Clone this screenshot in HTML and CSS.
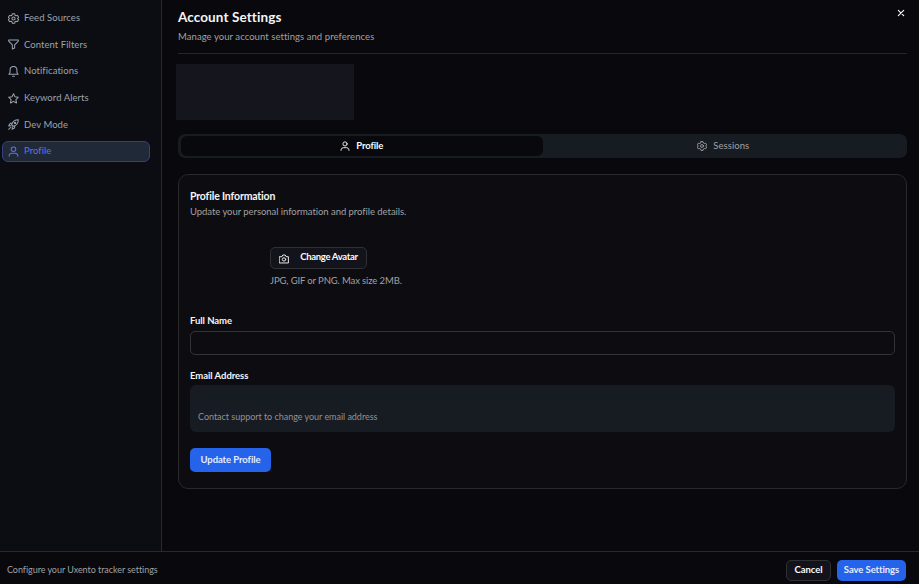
FILE: index.html
```html
<!DOCTYPE html>
<html lang="en">
<head>
<meta charset="utf-8">
<title>Account Settings</title>
<link rel="stylesheet" href="styles.css">
</head>
<body>
<svg width="0" height="0" class="defs">
  <defs>
    <symbol id="gear" viewBox="0 0 24 24"><path d="M9.500 1.500h5l.8 3.300 2.300 1.300 3.200-.9 2.300 4.200L20.800 12l2.300 2.600-2.300 4.200-3.200-.9-2.300 1.300-.8 3.300h-5l-.8-3.300-2.300-1.300-3.200.9-2.300-4.200L3.200 12 .9 9.400l2.300-4.200 3.200.9 2.300-1.300z"/><circle cx="12" cy="12" r="3.500"/></symbol>
    <symbol id="filter" viewBox="0 0 24 24"><path d="M1.500 2h21v2.500L14.500 13v6.500l-5 2.500v-9L1.500 4.500z"/></symbol>
    <symbol id="bell" viewBox="0 0 24 24"><path d="M2 18l2.500-4V8.500a7.500 7.500 0 0 1 15 0V14l2.500 4zM10 22.500h4"/></symbol>
    <symbol id="star" viewBox="0 0 24 24"><path d="M12 1.500l3.200 6.700 7.300 1-5.300 5.200 1.300 7.300-6.500-3.500-6.500 3.500 1.300-7.300L1.500 9.200l7.300-1z"/></symbol>
    <symbol id="rocket" viewBox="0 0 24 24"><path d="M8 12C10 6 14 1.500 22.500 1.500 22.500 10 18 14 12 16zM9 9.500H5l-3.500 5.500 5.500-.5M14.500 15v4L9 22.500l.5-5.500M1.500 22.500l4.500-4.500"/><circle cx="15.500" cy="8.500" r="1.500"/></symbol>
    <symbol id="user" viewBox="0 0 24 24"><circle cx="12" cy="7" r="5"/><path d="M2.500 22.500V21a6 6 0 0 1 6-5h7a6 6 0 0 1 6 5v1.500"/></symbol>
    <symbol id="camera" viewBox="0 0 24 24"><path d="M1.500 6.500H7l2-4h6l2 4h5.500v15h-21z"/><circle cx="12" cy="13" r="4"/></symbol>
    <symbol id="close" viewBox="0 0 24 24"><path d="M4 4l16 16M20 4L4 20"/></symbol>
  </defs>
</svg>
<div class="app">
  <div class="body">
    <nav class="sidebar">
      <a class="item"><svg><use href="#gear"/></svg><span>Feed Sources</span></a>
      <a class="item"><svg><use href="#filter"/></svg><span>Content Filters</span></a>
      <a class="item"><svg><use href="#bell"/></svg><span>Notifications</span></a>
      <a class="item"><svg><use href="#star"/></svg><span>Keyword Alerts</span></a>
      <a class="item"><svg><use href="#rocket"/></svg><span>Dev Mode</span></a>
      <a class="item active"><svg><use href="#user"/></svg><span>Profile</span></a>
    </nav>
    <main class="main">
      <header class="head">
        <div>
          <h1>Account Settings</h1>
          <p class="subtitle">Manage your account settings and preferences</p>
        </div>
        <svg class="close"><use href="#close"/></svg>
      </header>
      <div class="placeholder"></div>
      <div class="tabs">
        <div class="tab selected"><svg><use href="#user"/></svg><span>Profile</span></div>
        <div class="tab"><svg><use href="#gear"/></svg><span>Sessions</span></div>
      </div>
      <section class="card">
        <h2>Profile Information</h2>
        <p class="desc">Update your personal information and profile details.</p>
        <div class="avatar">
          <button class="btn outline change"><svg><use href="#camera"/></svg><span>Change Avatar</span></button>
          <p class="hint">JPG, GIF or PNG. Max size 2MB.</p>
        </div>
        <label class="label name">Full Name</label>
        <div class="input"></div>
        <label class="label email">Email Address</label>
        <div class="readonly"><span>Contact support to change your email address</span></div>
        <button class="btn primary update"><span>Update Profile</span></button>
      </section>
    </main>
  </div>
  <footer class="footer">
    <span class="note">Configure your Uxento tracker settings</span>
    <button class="btn outline cancel"><span>Cancel</span></button>
    <button class="btn primary save"><span>Save Settings</span></button>
  </footer>
</div>
</body>
</html>
```
FILE: styles.css
```css
* { box-sizing: border-box; margin: 0; }
body {
  background: #08080d;
  color: #f5f5f5;
  font: 9.5px/14px Lato, "Liberation Sans", sans-serif;
  font-variant-ligatures: none;
  overflow: hidden;
}
.defs { position: absolute; }
svg { width: 10px; height: 10px; flex: none; fill: none; stroke: currentColor; stroke-width: 2.2; stroke-linejoin: round; stroke-linecap: round; }
span, p, h1, h2, label { white-space: nowrap; }
.app { height: 584px; display: flex; flex-direction: column; }
.body { height: 551px; display: flex; }
.sidebar {
  width: 162px; padding: 7.5px 11px 0 2px; border-right: 1px solid #29292e;
  background: #0b0d12; display: flex; flex-direction: column; gap: 5.7px;
}
.item {
  height: 21px; padding-left: 5px; border: 1px solid transparent; border-radius: 6px;
  display: flex; align-items: center; gap: 6px; color: #9ca3af; letter-spacing: .06px;
}
.item svg { width: 11px; height: 11px; margin-right: -1px; }
.item.active { background: #1f2937; border-color: #35417a; color: #6470e8; }
.main { flex: 1; padding: 0 12px 0 16px; }
.head { height: 54px; padding-top: 9px; border-bottom: 1px solid #27272b; display: flex; justify-content: space-between; }
h1 { font-size: 13.5px; line-height: 17px; letter-spacing: .1px; }
.subtitle { margin-top: 4px; color: #a1a1a1; letter-spacing: .06px; }
.close { width: 8px; height: 8px; margin-right: 2px; stroke-width: 3.5; }
.placeholder { width: 178px; height: 56px; margin: 10px 0 14px -2px; background: #15151e; }
.tabs { height: 24px; padding: 2px 3px; border-radius: 7px; background: #171b22; display: flex; }
.tab { flex: 1; display: flex; align-items: center; justify-content: center; gap: 6px; border-radius: 6px; color: #a1a1a1; letter-spacing: .06px; }
.tab.selected { background: #08080d; color: #fafafa; font-weight: 700; letter-spacing: -.1px; }
.card { height: 315px; margin-top: 16px; padding: 14px 11px 0; border: 1px solid #29292b; border-radius: 10px; background: #0d0c11; display: flex; flex-direction: column; align-items: flex-start; }
h2 { font-size: 10.5px; line-height: 14px; letter-spacing: -.16px; }
.desc { margin-top: 2px; color: #a1a1a1; letter-spacing: -.05px; }
.avatar { margin: 28px 0 0 80px; height: 67px; }
.btn { display: flex; align-items: center; justify-content: center; padding: 0; border: 0; border-radius: 5px; color: #fafafa; font: 700 9.5px/14px Lato, sans-serif; font-variant-ligatures: none; letter-spacing: -.08px; }
.outline { background: #13131b; border: 1px solid #303034; }
.primary { background: #2563eb; color: #e4ecff; }
.change { width: 97px; height: 22px; gap: 11px; padding-bottom: 2px; letter-spacing: -.3px; }
.change svg { margin-top: 3px; }
.hint { margin-top: 5px; color: #a1a1a1; letter-spacing: -.12px; }
.label { font-weight: 700; letter-spacing: -.05px; }
.input { width: 100%; height: 24px; margin-top: 3px; border: 1px solid #343437; border-radius: 5px; }
.email { margin-top: 14px; }
.readonly { width: 100%; height: 47px; margin-top: 2px; padding: 25px 8px 0; border-radius: 6px; background: #171b22; color: #929292; font-size: 9px; letter-spacing: -.03px; }
.update { width: 81px; height: 24px; margin-top: 16px; }
.footer { height: 33px; padding: 4px 13px 0 7px; border-top: 1px solid #29292d; display: flex; align-items: center; }
.note { margin-right: auto; color: #a1a1a1; font-size: 9px; letter-spacing: -.05px; }
.cancel { width: 45px; height: 21px; margin-right: 6px; }
.save { width: 69px; height: 21px; }
```
